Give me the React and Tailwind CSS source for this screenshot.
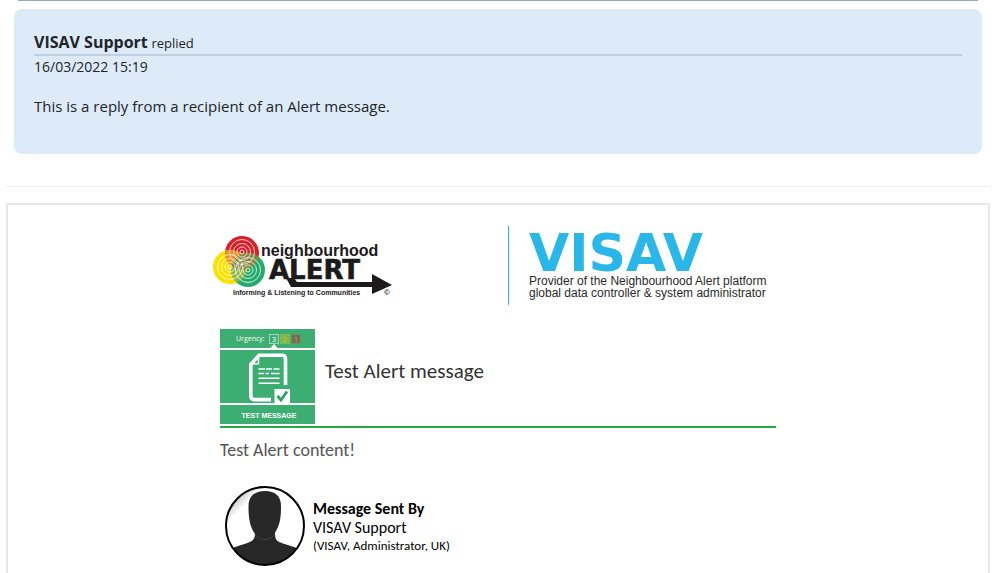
import React from 'react';

const reply = {
  name: 'VISAV Support',
  date: '16/03/2022 15:19',
  text: 'This is a reply from a recipient of an Alert message.',
};

const sender = {
  name: 'VISAV Support',
  role: '(VISAV, Administrator, UK)',
};

const logoRings = [
  { cx: 32, cy: 27 },
  { cx: 20, cy: 42 },
  { cx: 38, cy: 45 },
];

const urgencyLevels = [
  { level: '3', x: 49, fill: '#3dae72', stroke: '#b9e2cc', text: '#ffffff' },
  { level: '2', x: 60, fill: '#86b43c', stroke: '#7fbf5f', text: '#b5d36a' },
  { level: '1', x: 71, fill: '#7a6a50', stroke: '#6f9468', text: '#b3a18a' },
];

function NeighbourhoodAlertLogo() {
  return (
    <svg className="h-20 w-[204px] shrink-0" viewBox="0 0 204 80" role="img" aria-label="Neighbourhood Alert">
      <defs>
        <clipPath id="red-circle">
          <circle cx="32" cy="28" r="17" />
        </clipPath>
        <clipPath id="yellow-circle">
          <circle cx="20" cy="42" r="17" />
        </clipPath>
      </defs>
      <circle cx="32" cy="28" r="17" fill="#d8202a" />
      <circle cx="20" cy="42" r="17" fill="#fae100" />
      <circle cx="38" cy="45" r="17" fill="#22ab6c" />
      <circle cx="20" cy="42" r="17" fill="#ef8a1f" clipPath="url(#red-circle)" />
      <circle cx="38" cy="45" r="17" fill="#8fb545" clipPath="url(#yellow-circle)" />
      <circle cx="38" cy="45" r="17" fill="#84863c" clipPath="url(#red-circle)" />
      {logoRings.map((ring) => (
        <g key={ring.cx} fill="none" stroke="#ffffff" strokeOpacity="0.85">
          <circle cx={ring.cx} cy={ring.cy} r="12.5" strokeWidth="0.9" />
          <circle cx={ring.cx} cy={ring.cy} r="8.5" strokeWidth="0.9" />
          <circle cx={ring.cx} cy={ring.cy} r="5" strokeWidth="0.9" />
          <circle cx={ring.cx} cy={ring.cy} r="2" strokeWidth="1" />
        </g>
      ))}
      <path d="M76 53 L81 62 H162 V69 L182 60 L162 49 V57 H87 L84 53 Z" fill="#1d1a1b" />
      <g fill="#1d1a1b" fontFamily="'Liberation Sans', Arial, sans-serif" fontWeight="bold">
        <text x="51" y="31" fontSize="16">neighbourhood</text>
        <text x="59" y="54" fontSize="26" fontFamily="'DejaVu Sans', sans-serif" stroke="#1d1a1b" strokeWidth="0.6">ALERT</text>
        <text x="23" y="70" fontSize="7">Informing &amp; Listening to Communities</text>
        <text x="174" y="70" fontSize="8">©</text>
      </g>
    </svg>
  );
}

function VisavLogo() {
  return (
    <svg className="h-20 w-[270px] shrink-0 overflow-visible" viewBox="0 0 270 80" role="img" aria-label="VISAV">
      <rect x="0" y="1" width="1" height="79" fill="#29b6e8" />
      <text x="21" y="46" fontSize="52" fontWeight="bold" fontFamily="'DejaVu Sans', sans-serif" fill="#29b6e8">VISAV</text>
      <g fill="#2a2a2a" fontSize="12" fontFamily="'Liberation Sans', Arial, sans-serif">
        <text x="21" y="60">Provider of the Neighbourhood Alert platform</text>
        <text x="21" y="72">global data controller &amp; system administrator</text>
      </g>
    </svg>
  );
}

function TestMessageBadge() {
  return (
    <svg className="size-[95px] shrink-0" viewBox="0 0 95 95" role="img" aria-label="Test message">
      <g fill="#3dae72">
        <rect width="95" height="19" />
        <rect y="21" width="95" height="53" />
        <rect y="76" width="95" height="19" />
      </g>
      <path d="M50 19.5 L54 15 L58 19.5 Z" fill="#ffffff" />
      <text x="16" y="12" fontSize="7" fontFamily="'Open Sans', sans-serif" fill="#ffffff">Urgency:</text>
      {urgencyLevels.map((item) => (
        <g key={item.level}>
          <rect x={item.x + 0.5} y="5.5" width="9" height="9" fill={item.fill} stroke={item.stroke} strokeWidth="0.8" />
          <text x={item.x + 5} y="13" fontSize="8" textAnchor="middle" fontFamily="'Open Sans', sans-serif" fill={item.text}>
            {item.level}
          </text>
        </g>
      ))}
      <g fill="none" stroke="#ffffff">
        <path d="M65.5 56 V30 Q65.5 26.3 62 26.3 H39 L30.8 35.5 V67 Q30.8 70.6 34.5 70.6 H51" strokeWidth="3.6" />
        <path d="M38.5 27 V34.8 H31" strokeWidth="1.5" />
        <path d="M38.5 40 H45 M46 40 H52 M53.5 40 H59.5 M38.5 44.5 H44 M45.5 44.5 H49 M51 44.5 H59.5" strokeWidth="1.6" />
        <path d="M38.5 49.3 H59.5 M38.5 54.2 H59.5" strokeWidth="1.6" />
      </g>
      <rect x="54.5" y="60" width="15.5" height="14.5" fill="#ffffff" />
      <path d="M57.5 67 L61 71 L67 62.5" fill="none" stroke="#2f9f63" strokeWidth="2.8" />
      <text x="49" y="89" fontSize="7" fontWeight="bold" textAnchor="middle" fontFamily="'Liberation Sans', Arial, sans-serif" fill="#ffffff">
        TEST MESSAGE
      </text>
    </svg>
  );
}

function Avatar() {
  return (
    <svg className="size-20 shrink-0" viewBox="0 0 80 80" aria-hidden="true">
      <defs>
        <clipPath id="avatar-clip">
          <circle cx="40" cy="40" r="39" />
        </clipPath>
        <linearGradient id="avatar-shade" x1="0.1" y1="0.1" x2="0.24" y2="0.24">
          <stop offset="0" stopColor="#b5b5b5" />
          <stop offset="1" stopColor="#ffffff" />
        </linearGradient>
      </defs>
      <circle cx="40" cy="40" r="39" fill="url(#avatar-shade)" />
      <g clipPath="url(#avatar-clip)" fill="#282828">
        <path d="M30 46 C30 54 28 55 21 57.5 L10 61 C5 63 3 67 2 80 H78 C77 67 75 63 69 61 L58 57.5 C51 55 50 54 50 46 Z" />
        <path d="M40 5 C50 5 56 10 56 20 C56 31 55 38 51 45 C48 50 44 52.5 40 52.5 C36 52.5 31 50 28 45 C24.5 38 23.5 31 23.5 20 C23.5 10 30 5 40 5 Z" />
        <path d="M30.5 49 C34 53 37 53.5 40 53.5 C44 53.5 48 51 50 48" fill="none" stroke="#555555" strokeWidth="0.6" />
      </g>
      <circle cx="40" cy="40" r="39" fill="none" stroke="#000000" strokeWidth="2" />
    </svg>
  );
}

function ReplyCard() {
  return (
    <article className="mx-2 mt-2 rounded-lg bg-[#ddeaf7] p-5 pb-9 text-[#212529]">
      <header className="mt-0.5 border-b-2 border-[#c1cfde] text-sm leading-[22px]">
        <strong className="text-base leading-[22px] font-bold">{reply.name}</strong>{' '}
        <span className="text-[13px]">replied</span>
      </header>
      <time className="block text-sm leading-[22px]">{reply.date}</time>
      <p className="mt-4 text-[15px] leading-6">{reply.text}</p>
    </article>
  );
}

function AlertMessage() {
  return (
    <main className="mt-4 flex-1 border-2 border-b-0 border-[#e8e8e8] pt-5 font-['Carlito','Lato',sans-serif]">
      <div className="mx-auto max-w-[576px]">
        <div className="flex items-center justify-between pr-2">
          <NeighbourhoodAlertLogo />
          <VisavLogo />
        </div>
        <div className="mt-6 px-2.5">
          <div className="flex items-center gap-2.5 border-b-2 border-[#28a745] pb-0.5">
            <TestMessageBadge />
            <h1 className="pb-3 text-[21px] leading-7 text-[#333333]">Test Alert message</h1>
          </div>
          <p className="mt-2 text-lg leading-7 text-[#555555]">Test Alert content!</p>
          <div className="mt-[22px] flex items-center gap-2 pl-[5px] text-black">
            <Avatar />
            <div>
              <p className="text-base leading-[19px] font-bold">Message Sent By</p>
              <p className="text-base leading-[19px]">{sender.name}</p>
              <p className="text-[13px] leading-[17px]">{sender.role}</p>
            </div>
          </div>
        </div>
      </div>
    </main>
  );
}

export default function App() {
  return (
    <div className="flex h-screen flex-col overflow-hidden bg-white pr-3.5 pl-1.5 font-['Open_Sans',sans-serif]">
      {/* lower edge of the message above */}
      <div className="mx-3 h-px shrink-0 bg-[#93aac6]" />
      <ReplyCard />
      <hr className="mt-8 border-[#eeeeee]" />
      <AlertMessage />
    </div>
  );
}
